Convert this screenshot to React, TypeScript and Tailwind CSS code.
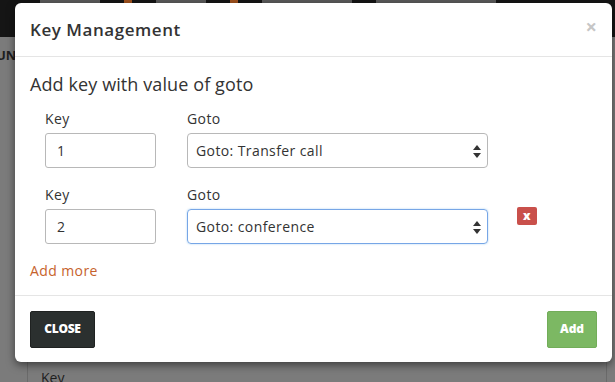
import { useState } from 'react';

const font = { fontFamily: '"Open Sans", "Noto Sans", Arial, sans-serif' };

const rows = [
  { key: '1', goto: 'Goto: Transfer call', focused: false, removable: false },
  { key: '2', goto: 'Goto: conference', focused: true, removable: true },
];

const SelectArrows = () => (
  <svg width="8" height="13" viewBox="0 0 8 13" className="absolute right-[6px] top-[11px]">
    <path d="M4 0 L8 5 L0 5 Z" fill="#333" />
    <path d="M4 13 L8 8 L0 8 Z" fill="#333" />
  </svg>
);

export default function App() {
  const [items] = useState(rows);

  return (
    <div className="relative w-[615px] h-[382px] overflow-hidden bg-[#7b7b7b]" style={font}>
      {/* page behind the dialog */}
      <div className="h-[37px] bg-[#151515] flex items-start gap-6 px-10">
        <div className="w-[60px] h-[3px] bg-[#5a5a5a]" />
        <div className="w-[8px] h-[3px] bg-[#a0521e]" />
        <div className="w-[50px] h-[3px] bg-[#5a5a5a]" />
        <div className="w-[8px] h-[3px] bg-[#a0521e]" />
        <div className="w-[90px] h-[3px] bg-[#5a5a5a]" />
        <div className="w-[120px] h-[3px] bg-[#5a5a5a]" />
      </div>
      <div className="pt-[12px] text-[13px] font-bold text-[#1e1e1e] leading-none -ml-[4px]">UN</div>
      <div className="absolute left-[27px] top-[362px] w-[580px] h-[40px] border-x border-[#6a6a6a] px-[13px] pt-[5px] text-[14px] text-[#1e1e1e]">
        Key
      </div>

      {/* dialog */}
      <div className="absolute left-[15px] top-[3px] w-[597px] h-[359px] bg-white rounded-[6px] shadow-[0_3px_9px_rgba(0,0,0,0.5)] flex flex-col">
        <div className="h-[54px] px-[15px] flex items-center justify-between border-b border-[#e5e5e5]">
          <h4 className="text-[17px] font-semibold text-[#333] leading-none tracking-[0.55px]">Key Management</h4>
          <span className="text-[#c6c6c6] text-[20px] font-bold leading-none -mt-[6px] mr-[0px]">×</span>
        </div>

        <div className="px-[15px] pt-[15px] flex-1 tracking-[0.4px]">
          <p className="text-[18px] font-normal text-[#333] leading-[24px] tracking-[0.1px]">Add key with value of goto</p>

          <div className="pl-[15px] pt-[14px] flex flex-col gap-[18px]">
            {items.map((row) => (
              <div key={row.key} className="flex items-end">
                <div className="w-[142px]">
                  <div className="text-[14px] text-[#333] leading-[17px] mb-[6px]">Key</div>
                  <div className="w-[111px] h-[35px] border border-[#b8b8b8] rounded-[3px] px-[11px] flex items-center text-[14px] text-[#333]">
                    {row.key}
                  </div>
                </div>
                <div className="w-[330px]">
                  <div className="text-[14px] text-[#333] leading-[17px] mb-[6px]">Goto</div>
                  <div
                    className={
                      row.focused
                        ? 'relative w-[301px] h-[35px] border border-[#77a6e6] rounded-[4px] px-[8px] flex items-center text-[14px] text-[#333] shadow-[0_0_2px_rgba(102,175,233,0.6)]'
                        : 'relative w-[301px] h-[35px] border border-[#b8b8b8] rounded-[4px] px-[8px] flex items-center text-[14px] text-[#333]'
                    }
                  >
                    {row.goto}
                    <SelectArrows />
                  </div>
                </div>
                {row.removable && (
                  <div className="mb-[19px] w-[20px] h-[18px] rounded-[2px] bg-[#c9504b] flex items-center justify-center text-white text-[12px] font-black leading-none">
                    x
                  </div>
                )}
              </div>
            ))}
          </div>

          <div className="mt-[18px] text-[14px] text-[#c6622c] leading-[17px]">Add more</div>
        </div>

        <div className="h-[67px] border-t border-[#e5e5e5] px-[15px] flex items-center justify-between">
          <button className="w-[65px] h-[37px] bg-[#2b302f] border border-[#1f2221] rounded-[2px] text-white text-[12px] font-black uppercase tracking-tight">
            Close
          </button>
          <button className="w-[50px] h-[37px] bg-[#7cb863] border border-[#72ad59] rounded-[2px] text-white text-[12px] font-black">
            Add
          </button>
        </div>
      </div>
    </div>
  );
}
